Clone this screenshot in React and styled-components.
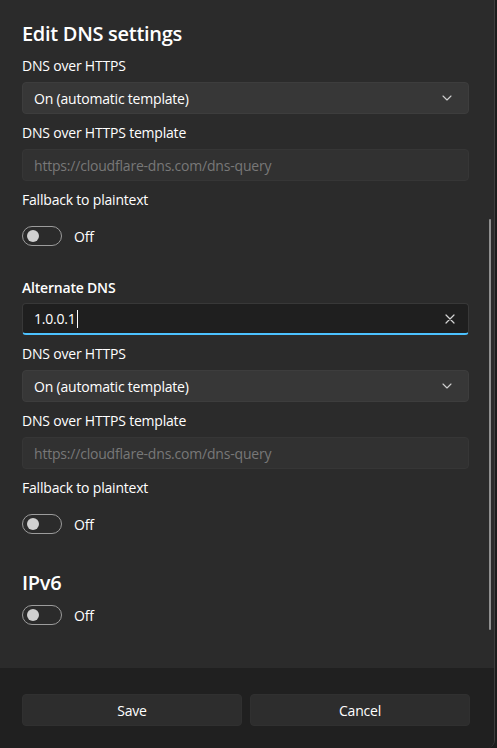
import styled, { createGlobalStyle } from 'styled-components';

const GlobalStyle = createGlobalStyle`
	html, body {
		margin: 0;
		padding: 0;
		background: #1c1c1c;
	}
	body {
		font-family: 'Open Sans', 'Noto Sans', sans-serif;
		color: #ffffff;
		letter-spacing: -0.2px;
		-webkit-font-smoothing: antialiased;
	}
`;

function Chevron() {
	return (
		<svg width='10' height='6' viewBox='0 0 10 6' fill='none'>
			<path d='M1 1l4 4 4-4' stroke='#cfcfcf' strokeWidth='1.1' strokeLinecap='round' strokeLinejoin='round' />
		</svg>
	);
}

function ClearIcon() {
	return (
		<svg width='10' height='10' viewBox='0 0 10 10' fill='none'>
			<path d='M1 1l8 8M9 1l-8 8' stroke='#d4d4d4' strokeWidth='1.2' strokeLinecap='round' />
		</svg>
	);
}

function Select({ value }) {
	return (
		<SelectBox>
			<span>{value}</span>
			<Chevron />
		</SelectBox>
	);
}

function Toggle({ label = 'Off', top }) {
	return (
		<ToggleRow $top={top}>
			<Track>
				<Knob />
			</Track>
			<span>{label}</span>
		</ToggleRow>
	);
}

function DohGroup({ first }) {
	return (
		<>
			<Label $top={first ? 8 : 9}>DNS over HTTPS</Label>
			<Select value='On (automatic template)' />
			<Label>DNS over HTTPS template</Label>
			<Disabled>https://cloudflare-dns.com/dns-query</Disabled>
			<Label>Fallback to plaintext</Label>
			<Toggle />
		</>
	);
}

export default function App() {
	return (
		<Window>
			<GlobalStyle />
			<Panel>
				<Heading>Edit DNS settings</Heading>
				<DohGroup first />
				<Label $strong $top={26}>Alternate DNS</Label>
				<TextField>
					<span>
						1.0.0.1<Caret />
					</span>
					<ClearIcon />
				</TextField>
				<DohGroup />
				<Heading $top={29}>IPv6</Heading>
				<Toggle top={2} />
				<Scrollbar />
			</Panel>
			<Footer>
				<Button>Save</Button>
				<Button>Cancel</Button>
			</Footer>
		</Window>
	);
}

const Window = styled.div`
	width: 494px;
	height: 748px;
	display: flex;
	flex-direction: column;
	border-right: 1px solid #3e3e3e;
	border-bottom-right-radius: 8px;
	overflow: hidden;
	background: #202020;
`;

const Panel = styled.div`
	position: relative;
	height: 668px;
	box-sizing: border-box;
	padding: 20px 25px 0 22px;
	background: #2b2b2b;
	display: flex;
	flex-direction: column;
	overflow: hidden;
`;

const Heading = styled.h2`
	margin: ${(p) => p.$top || 0}px 0 0;
	font-size: 20px;
	line-height: 28px;
	font-weight: 600;
	letter-spacing: -0.3px;
`;

const Label = styled.div`
	margin-top: ${(p) => p.$top ?? 9}px;
	font-size: 14px;
	line-height: 20px;
	font-weight: ${(p) => (p.$strong ? 600 : 400)};
`;

const Field = styled.div`
	margin-top: 6px;
	height: 32px;
	box-sizing: border-box;
	display: flex;
	align-items: center;
	justify-content: space-between;
	padding: 0 16px 0 11px;
	border-radius: 4px;
	font-size: 14px;
`;

const SelectBox = styled(Field)`
	background: #373737;
	border: 1px solid #3d3d3d;
	color: #ffffff;
`;

const Disabled = styled(Field)`
	background: #313131;
	border: 1px solid #363636;
	color: #787878;
`;

const TextField = styled(Field)`
	margin-top: 5px;
	background: #1f1f1f;
	border: 1px solid #383838;
	border-bottom: 2px solid #4cc2ff;
	padding-right: 13px;

	span {
		display: flex;
		align-items: center;
	}
`;

const Caret = styled.i`
	display: inline-block;
	width: 1px;
	height: 18px;
	margin-left: 1px;
	background: #ffffff;
`;

const ToggleRow = styled.div`
	margin-top: ${(p) => p.$top ?? 10}px;
	height: 32px;
	display: flex;
	align-items: center;
	gap: 12px;
	font-size: 14px;
`;

const Track = styled.div`
	width: 40px;
	height: 20px;
	box-sizing: border-box;
	border: 1px solid #9c9c9c;
	border-radius: 10px;
	display: flex;
	align-items: center;
	padding-left: 4px;
`;

const Knob = styled.div`
	width: 12px;
	height: 12px;
	border-radius: 50%;
	background: #d0d0d0;
`;

const Scrollbar = styled.div`
	position: absolute;
	top: 219px;
	right: 3px;
	width: 2px;
	height: 411px;
	border-radius: 1px;
	background: #8f8f8f;
`;

const Footer = styled.div`
	flex: 1;
	display: grid;
	grid-template-columns: 1fr 1fr;
	gap: 8px;
	align-items: start;
	padding: 26px 24px 0 22px;
	background: #202020;
`;

const Button = styled.button`
	height: 32px;
	border: 1px solid #303030;
	border-radius: 4px;
	background: #2d2d2d;
	color: #ffffff;
	font-family: inherit;
	font-size: 14px;
	letter-spacing: inherit;
`;
